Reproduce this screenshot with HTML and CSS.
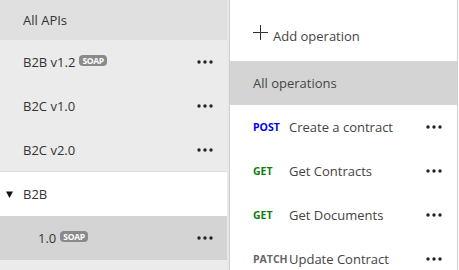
FILE: index.html
```html
<!DOCTYPE html>
<html lang="en">
<head>
    <meta charset="UTF-8">
    <title>APIs</title>
    <link rel="stylesheet" href="styles.css">
</head>
<body>
    <div class="apis">
        <div class="all-apis">All APIs</div>
        <div class="api-row">
            <span class="api-name">B2B v1.2</span><span class="badge">SOAP</span>
            <svg class="more" width="16" height="4" viewBox="0 0 16 4"><circle cx="2" cy="2" r="1.7"/><circle cx="8" cy="2" r="1.7"/><circle cx="14" cy="2" r="1.7"/></svg>
        </div>
        <div class="api-row">
            <span class="api-name">B2C v1.0</span>
            <svg class="more" width="16" height="4" viewBox="0 0 16 4"><circle cx="2" cy="2" r="1.7"/><circle cx="8" cy="2" r="1.7"/><circle cx="14" cy="2" r="1.7"/></svg>
        </div>
        <div class="api-row last">
            <span class="api-name">B2C v2.0</span>
            <svg class="more" width="16" height="4" viewBox="0 0 16 4"><circle cx="2" cy="2" r="1.7"/><circle cx="8" cy="2" r="1.7"/><circle cx="14" cy="2" r="1.7"/></svg>
        </div>
        <div class="group-row">
            <svg class="caret" width="7" height="7" viewBox="0 0 7 7"><path d="M0 0.5H7L3.5 7Z"/></svg>
            <span class="api-name">B2B</span>
        </div>
        <div class="api-row sub selected">
            <span class="api-name">1.0</span><span class="badge">SOAP</span>
            <svg class="more" width="16" height="4" viewBox="0 0 16 4"><circle cx="2" cy="2" r="1.7"/><circle cx="8" cy="2" r="1.7"/><circle cx="14" cy="2" r="1.7"/></svg>
        </div>
    </div>
    <div class="divider"></div>
    <div class="operations">
        <div class="add-op">
            <svg class="plus" width="15" height="15" viewBox="0 0 15 15">
                <path d="M7.5 0V15M0 7.5H15" stroke="#333" stroke-width="1"/>
            </svg>
            <span>Add operation</span>
        </div>
        <div class="all-ops">All operations</div>
        <div class="op-row">
            <span class="method post">POST</span>
            <span class="op-name">Create a contract</span>
            <svg class="more" width="16" height="4" viewBox="0 0 16 4"><circle cx="2" cy="2" r="1.7"/><circle cx="8" cy="2" r="1.7"/><circle cx="14" cy="2" r="1.7"/></svg>
        </div>
        <div class="op-row">
            <span class="method get">GET</span>
            <span class="op-name">Get Contracts</span>
            <svg class="more" width="16" height="4" viewBox="0 0 16 4"><circle cx="2" cy="2" r="1.7"/><circle cx="8" cy="2" r="1.7"/><circle cx="14" cy="2" r="1.7"/></svg>
        </div>
        <div class="op-row">
            <span class="method get">GET</span>
            <span class="op-name">Get Documents</span>
            <svg class="more" width="16" height="4" viewBox="0 0 16 4"><circle cx="2" cy="2" r="1.7"/><circle cx="8" cy="2" r="1.7"/><circle cx="14" cy="2" r="1.7"/></svg>
        </div>
        <div class="op-row">
            <span class="method patch">PATCH</span>
            <span class="op-name">Update Contract</span>
            <svg class="more" width="16" height="4" viewBox="0 0 16 4"><circle cx="2" cy="2" r="1.7"/><circle cx="8" cy="2" r="1.7"/><circle cx="14" cy="2" r="1.7"/></svg>
        </div>
    </div>
</body>
</html>
```
FILE: styles.css
```css
body {
    margin: 0;
    font-family: 'Open Sans', 'Noto Sans', sans-serif;
    font-size: 13px;
    color: #333;
    display: flex;
    height: 270px;
    overflow: hidden;
    background-color: #fff;
}

.apis {
    width: 227px;
    background-color: #ebebeb;
    flex-shrink: 0;
}

.all-apis {
    height: 40px;
    line-height: 40px;
    padding-left: 23px;
    background-color: #e0e0e0;
}

.api-row,
.group-row {
    display: flex;
    align-items: center;
    height: 44px;
    padding-left: 23px;
    padding-right: 14px;
}

.api-row.last {
    height: 43px;
    border-bottom: 1px solid #dcdcdc;
}

.group-row {
    background-color: #fff;
    padding-left: 6px;
}

.caret {
    fill: #111;
    margin-right: 10px;
}

.api-row.sub {
    padding-left: 38px;
}

.api-row.selected {
    background-color: #d4d4d4;
}

.badge {
    background-color: #8a8a8a;
    color: #fff;
    font-size: 8.5px;
    line-height: 11px;
    font-weight: bold;
    letter-spacing: -0.3px;
    border-radius: 4px;
    padding: 0 3px;
    margin-left: 4px;
    position: relative;
    top: -2px;
}

.more {
    margin-left: auto;
    fill: #222;
}

.divider {
    width: 2px;
    background-color: #e8e8e8;
    border-right: 1px solid #cfcfcf;
    flex-shrink: 0;
}

.operations {
    width: 227px;
    border-right: 1px solid #cfcfcf;
    color: #444;
}

.add-op {
    height: 61px;
    display: flex;
    align-items: center;
    padding-left: 23px;
    padding-top: 10px;
    box-sizing: border-box;
}

.plus {
    margin-right: 5px;
    margin-top: -6px;
}

.all-ops {
    height: 44px;
    line-height: 44px;
    padding-left: 23px;
    background-color: #d4d4d4;
}

.op-row {
    display: flex;
    align-items: center;
    height: 44px;
    padding-left: 23px;
    padding-right: 15px;
}

.method {
    width: 36px;
    font-size: 10.5px;
    font-weight: bold;
}

.method.post {
    color: #0000ee;
}

.method.get {
    color: #107c10;
}

.method.patch {
    color: #666;
}
```
